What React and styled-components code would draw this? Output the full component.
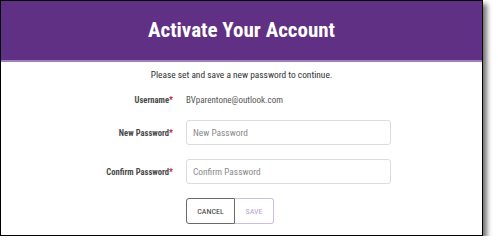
import React from "react";
import styled, { createGlobalStyle } from "styled-components";

const Global = createGlobalStyle`
  html, body { margin: 0; padding: 0; background: #fff; }
  body { font-family: "Roboto Condensed", "Liberation Sans", sans-serif; }
`;

const Frame = styled.div`
  width: 481px;
  height: 234px;
  border: 1px solid #000;
  box-shadow: 4px 4px 5px rgba(0, 0, 0, 0.55);
  background: #fff;
  display: flex;
  flex-direction: column;
`;

const Header = styled.header`
  height: 59px;
  background: #5f3083;
  border-bottom: 2px solid #9d80bb;
  display: flex;
  align-items: center;
  justify-content: center;
`;

const Title = styled.h1`
  margin: 0;
  color: #fff;
  font-size: 21px;
  font-weight: 700;
  line-height: 1;
`;

const Body = styled.main`
  display: flex;
  flex-direction: column;
  padding-top: 6px;
`;

const Intro = styled.p`
  margin: 0;
  text-align: center;
  font-size: 9.4px;
  line-height: 14px;
  color: #333;
`;

const Form = styled.form`
  margin-top: 12px;
  display: grid;
  grid-template-columns: 172px 205px;
  column-gap: 13px;
  row-gap: 14px;
  align-items: center;
`;

const Label = styled.label`
  justify-self: end;
  font-size: 8.6px;
  font-weight: 700;
  color: #4a4a4a;
  line-height: 12px;
  white-space: nowrap;
`;

const Star = styled.span`
  color: #c8102e;
`;

const Value = styled.span`
  font-size: 9px;
  color: #555;
  line-height: 12px;
`;

const Input = styled.input`
  box-sizing: border-box;
  width: 205px;
  height: 25px;
  border: 1px solid #dcdcdc;
  border-radius: 3px;
  padding: 0 6px;
  font-family: inherit;
  font-size: 9.4px;
  color: #333;
  outline: none;
  &::placeholder { color: #8a8a8a; }
`;

const Actions = styled.div`
  grid-column: 2;
  display: flex;
`;

const Button = styled.button`
  box-sizing: border-box;
  height: 26px;
  width: ${p => p.$w}px;
  padding: 0;
  background: #fff;
  font-family: inherit;
  font-size: 8px;
  text-transform: uppercase;
  border: 1px solid ${p => (p.$primary ? "#cdbde0" : "#6a6a6a")};
  color: ${p => (p.$primary ? "#b7a2cf" : "#333")};
  border-radius: ${p => (p.$primary ? "0 3px 3px 0" : "3px 0 0 3px")};
  ${p => p.$primary && "border-left: none;"}
  cursor: pointer;
`;

export default function App() {
  return (
    <>
      <Global />
      <Frame>
        <Header>
          <Title>Activate Your Account</Title>
        </Header>
        <Body>
          <Intro>Please set and save a new password to continue.</Intro>
          <Form onSubmit={e => e.preventDefault()}>
            <Label>Username<Star>*</Star></Label>
            <Value>BVparentone@outlook.com</Value>
            <Label htmlFor="np">New Password<Star>*</Star></Label>
            <Input id="np" type="password" placeholder="New Password" />
            <Label htmlFor="cp">Confirm Password<Star>*</Star></Label>
            <Input id="cp" type="password" placeholder="Confirm Password" />
            <Actions>
              <Button type="button" $w={49}>Cancel</Button>
              <Button type="submit" $primary $w={39}>Save</Button>
            </Actions>
          </Form>
        </Body>
      </Frame>
    </>
  );
}
